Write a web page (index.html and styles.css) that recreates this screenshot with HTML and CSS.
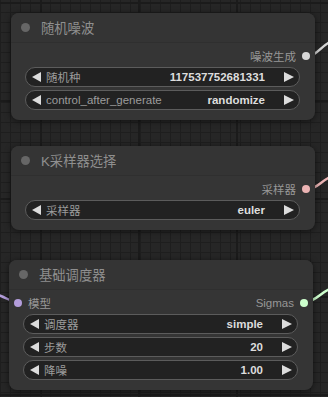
FILE: index.html
```html
<!DOCTYPE html>
<html lang="zh">
<head>
    <meta charset="UTF-8">
    <meta name="viewport" content="width=device-width, initial-scale=1.0">
    <title>节点</title>
    <link rel="stylesheet" href="styles.css">
</head>
<body>
    <div class="canvas">
        <!-- 连线 -->
        <svg class="links" width="328" height="397" viewBox="0 0 328 397">
            <path d="M306 56 C 317 56, 320 47, 330 42" stroke="#d4d4d4"/>
            <path d="M306 189 C 317 189, 320 182, 330 177" stroke="#ecb4b4"/>
            <path d="M304 302 C 315 302, 320 293, 330 289" stroke="#cdffcd"/>
            <path d="M-2 295 C 6 297, 10 302, 18 302" stroke="#b39ddb"/>
        </svg>

        <div class="node node-noise">
            <div class="node-title"><span class="title-dot"></span>随机噪波</div>
            <div class="node-body">
                <div class="slots">
                    <span class="slot-out">噪波生成<i class="dot dot-noise"></i></span>
                </div>
                <div class="widget"><i class="arrow-left"></i><span class="w-label">随机种</span><span class="w-value">117537752681331</span><i class="arrow-right"></i></div>
                <div class="widget"><i class="arrow-left"></i><span class="w-label">control_after_generate</span><span class="w-value">randomize</span><i class="arrow-right"></i></div>
            </div>
        </div>

        <div class="node node-sampler">
            <div class="node-title"><span class="title-dot"></span>K采样器选择</div>
            <div class="node-body">
                <div class="slots">
                    <span class="slot-out">采样器<i class="dot dot-sampler"></i></span>
                </div>
                <div class="widget"><i class="arrow-left"></i><span class="w-label">采样器</span><span class="w-value">euler</span><i class="arrow-right"></i></div>
            </div>
        </div>

        <div class="node node-sched">
            <div class="node-title"><span class="title-dot"></span>基础调度器</div>
            <div class="node-body">
                <div class="slots">
                    <span class="slot-in"><i class="dot dot-model"></i>模型</span>
                    <span class="slot-out">Sigmas<i class="dot dot-sigmas"></i></span>
                </div>
                <div class="widget"><i class="arrow-left"></i><span class="w-label">调度器</span><span class="w-value">simple</span><i class="arrow-right"></i></div>
                <div class="widget"><i class="arrow-left"></i><span class="w-label">步数</span><span class="w-value">20</span><i class="arrow-right"></i></div>
                <div class="widget"><i class="arrow-left"></i><span class="w-label">降噪</span><span class="w-value">1.00</span><i class="arrow-right"></i></div>
            </div>
        </div>
    </div>
</body>
</html>
```

FILE: styles.css
```css
* {
    margin: 0;
    padding: 0;
    box-sizing: border-box;
}

body {
    width: 328px;
    height: 397px;
    overflow: hidden;
    background: #232323;
    font-family: "Liberation Sans", Arial, "Noto Sans CJK SC", sans-serif;
    font-size: 11.5px;
}

.canvas {
    position: relative;
    width: 328px;
    height: 397px;
    background-color: #262626;
    background-image:
        linear-gradient(to right, #1b1b1b 2px, transparent 2px),
        linear-gradient(to bottom, #1b1b1b 2px, transparent 2px),
        linear-gradient(to right, #1e1e1e 1px, transparent 1px),
        linear-gradient(to bottom, #1e1e1e 1px, transparent 1px);
    background-size: 98px 98px, 98px 98px, 10px 10px, 10px 10px;
    background-position: 40px 2px, 40px 2px, 0 2px, 0 2px;
}

.links {
    position: absolute;
    top: 0;
    left: 0;
}

.links path {
    fill: none;
    stroke-width: 2.5;
}

/* 节点 */
.node {
    position: absolute;
    width: 304px;
    background: #353535;
    border-radius: 8px;
    box-shadow: 0 1px 6px rgba(0, 0, 0, 0.55);
}

.node-noise   { left: 11px; top: 13px; }
.node-sampler { left: 11px; top: 146px; }
.node-sched   { left: 9px;  top: 260px; }

.node-title {
    height: 30px;
    display: flex;
    align-items: center;
    padding-left: 10px;
    gap: 11px;
    color: #8f8f8f;
    font-size: 13.3px;
    background: #343434;
    border-radius: 8px 8px 0 0;
    border-bottom: 1px solid #2f2f2f;
}

.title-dot {
    width: 9px;
    height: 9px;
    border-radius: 50%;
    background: #666;
}

.node-body {
    padding: 3px 0 10px;
}

.slots {
    height: 20px;
    display: flex;
    align-items: center;
    justify-content: flex-end;
    padding: 0 5px;
    margin-bottom: 1px;
    color: #979797;
}

.slot-in {
    display: flex;
    align-items: center;
    gap: 6px;
    margin-right: auto;
}

.slot-out {
    display: flex;
    align-items: center;
    gap: 6px;
}

.dot {
    width: 8px;
    height: 8px;
    border-radius: 50%;
}

.dot-noise   { background: #d8d8d8; }
.dot-sampler { background: #ecb4b4; }
.dot-sigmas  { background: #cdffcd; }
.dot-model   { background: #b39ddb; }

/* 控件 */
.widget {
    height: 20px;
    margin: 0 15px 3px 14px;
    display: flex;
    align-items: center;
    padding: 0 5px 0 6px;
    background: #222;
    border: 1px solid #5c5c5c;
    border-radius: 10px;
}

.widget:last-child {
    margin-bottom: 0;
}

.arrow-left,
.arrow-right {
    width: 0;
    height: 0;
    border-top: 5px solid transparent;
    border-bottom: 5px solid transparent;
}

.arrow-left {
    border-right: 9px solid #dcdcdc;
}

.arrow-right {
    border-left: 10px solid #dcdcdc;
}

.w-label {
    margin-left: 5px;
    color: #9c9c9c;
}

.w-value {
    margin-left: auto;
    margin-right: 19px;
    color: #dddddd;
    font-weight: bold;
}
```
